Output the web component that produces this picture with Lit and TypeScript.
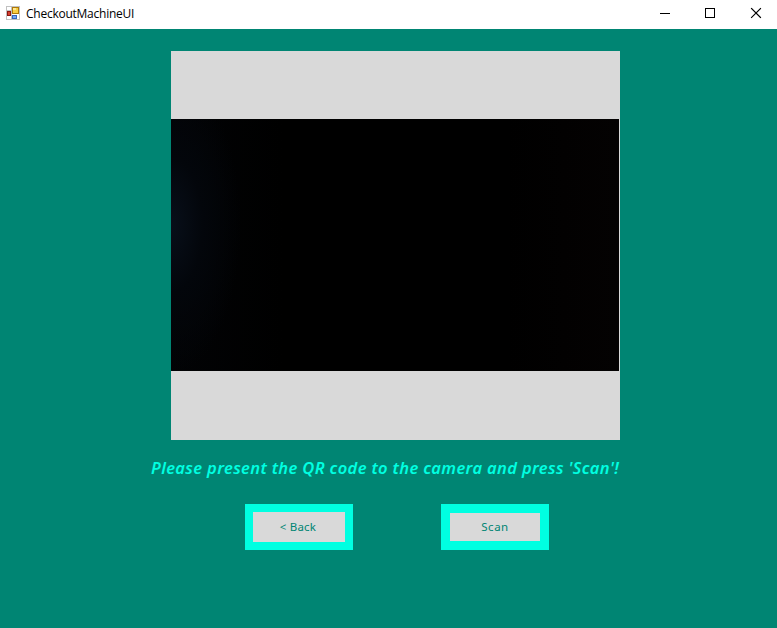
import { LitElement, html, css } from "lit";
import { customElement } from "lit/decorators.js";

@customElement("app-root")
class AppRoot extends LitElement {
  static styles = css`
    :host {
      display: flex;
      flex-direction: column;
      width: 100%;
      height: 100vh;
      overflow: hidden;
      background: #008573;
    }
    .titlebar {
      display: flex;
      align-items: flex-start;
      height: 29px;
      flex: none;
      background: #fff;
    }
    .logo { flex: none; margin: 6px 0 0 6px; }
    .title {
      margin-left: 6px;
      flex: 1;
      font: 12px/28px "Open Sans", sans-serif;
      letter-spacing: -0.25px;
      color: #000;
    }
    .controls { display: flex; flex: none; }
    .content { display: flex; flex-direction: column; flex: 1; }
    .viewer {
      display: flex;
      align-items: center;
      width: 449px;
      height: 389px;
      margin: 22px 0 0 171px;
      background: #d9d9d9;
    }
    .camera {
      width: 448px;
      height: 252px;
      margin-top: -1px;
      background:
        radial-gradient(ellipse 70px 150px at 0 42%, #080f1a 0%, #03060b 45%, transparent 100%),
        linear-gradient(90deg, #020305, #000 25%, #000 75%, #040202);
    }
    .prompt {
      margin: 15px 0 0 151px;
      font: italic 600 16.5px/25px "Noto Sans", sans-serif;
      letter-spacing: 0.35px;
      color: #00ffe1;
      white-space: nowrap;
    }
    .actions { display: flex; gap: 88px; margin: 24px 0 0 245px; }
    button {
      box-sizing: border-box;
      width: 108px;
      height: 46px;
      padding: 0;
      border: 8px solid #00ffe1;
      border-radius: 0;
      background: #d9d9d9;
      font: 11.5px/16px "Noto Sans", sans-serif;
      letter-spacing: 0.2px;
      color: #008573;
    }
    .back { padding-right: 2px; }
    .scan { border-width: 9px; letter-spacing: 0.5px; }
  `;

  render() {
    return html`
      <header class="titlebar">
        <svg class="logo" width="14" height="14" viewBox="0 0 14 14" shape-rendering="crispEdges">
          <path fill="#c1c1c1" d="M0 0h14v14H0z" />
          <path fill="#fff" d="M1 1h4v3H1zM1 10h4v3H1zM6 8h7v5H6z" />
          <path fill="#8b1712" d="M1 5h4v5H1z" />
          <path fill="#d6402f" d="M2 6h2v3H2z" />
          <path fill="#af7908" d="M6 1h7v7H6z" />
          <path fill="#f8ce43" d="M7 2h5v5H7z" />
          <path fill="#ffe893" d="M7 2h3v2H7z" />
          <path fill="#3566bf" d="M6 9h5v4H6z" />
          <path fill="#75a9f5" d="M7 10h3v2H7z" />
        </svg>
        <span class="title">CheckoutMachineUI</span>
        <svg class="controls" width="135" height="28" viewBox="642 0 135 28" fill="none" stroke="#000">
          <path d="M660 13.5h10M705.5 8.5h9v9h-9z" shape-rendering="crispEdges" />
          <path d="M751.5 8.5l9 9M760.5 8.5l-9 9" stroke-width="1.1" stroke-linecap="square" />
        </svg>
      </header>
      <main class="content">
        <section class="viewer"><div class="camera"></div></section>
        <div class="prompt">Please present the QR code to the camera and press 'Scan'!</div>
        <div class="actions">
          <button class="back">&lt; Back</button>
          <button class="scan">Scan</button>
        </div>
      </main>
    `;
  }
}
